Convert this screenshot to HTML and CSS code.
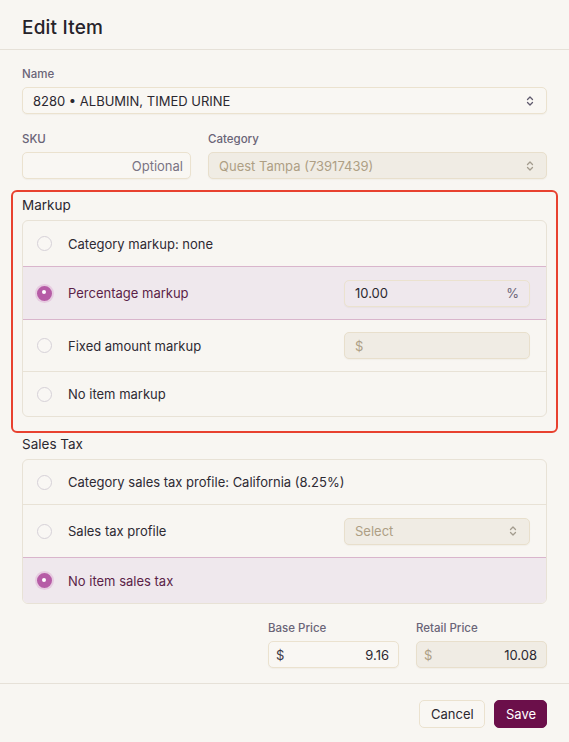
FILE: index.html
```html
<!DOCTYPE html>
<html>
<head>
<meta charset="utf-8">
<link rel="stylesheet" href="styles.css">
</head>
<body>
<div class="dialog">
  <div class="header"><h1>Edit Item</h1></div>
  <div class="body">
    <div class="field">
      <label class="lbl">Name</label>
      <div class="input select">
        <span class="val">8280 • ALBUMIN, TIMED URINE</span>
        <svg class="chev" width="8" height="12" viewBox="0 0 8 12"><path d="M1.5 4.5L4 2L6.5 4.5M1.5 7.5L4 10L6.5 7.5" fill="none" stroke="#5f5a6e" stroke-width="1.3" stroke-linecap="round" stroke-linejoin="round"/></svg>
      </div>
    </div>
    <div class="row2">
      <div class="field sku">
        <label class="lbl">SKU</label>
        <div class="input right"><span class="ph">Optional</span></div>
      </div>
      <div class="field cat">
        <label class="lbl">Category</label>
        <div class="input select disabled">
          <span class="dis">Quest Tampa (73917439)</span>
          <svg class="chev" width="8" height="12" viewBox="0 0 8 12"><path d="M1.5 4.5L4 2L6.5 4.5M1.5 7.5L4 10L6.5 7.5" fill="none" stroke="#a39c8e" stroke-width="1.3" stroke-linecap="round" stroke-linejoin="round"/></svg>
        </div>
      </div>
    </div>

    <div class="markup-wrap">
      <div class="section-title">Markup</div>
      <div class="card">
        <div class="opt first45"><span class="radio"></span><span class="otext">Category markup: none</span></div>
        <div class="opt sel tall"><span class="radio on"></span><span class="otext">Percentage markup</span>
          <div class="input side"><span class="val">10.00</span><span class="suffix">%</span></div>
        </div>
        <div class="opt tall short"><span class="radio"></span><span class="otext">Fixed amount markup</span>
          <div class="input side disabled"><span class="dis">$</span></div>
        </div>
        <div class="opt"><span class="radio"></span><span class="otext">No item markup</span></div>
      </div>
    </div>

    <div class="section-title tax">Sales Tax</div>
    <div class="card">
      <div class="opt"><span class="radio"></span><span class="otext">Category sales tax profile: California (8.25%)</span></div>
      <div class="opt tall"><span class="radio"></span><span class="otext">Sales tax profile</span>
        <div class="input side select disabled"><span class="dis">Select</span>
          <svg class="chev" width="8" height="12" viewBox="0 0 8 12"><path d="M1.5 4.5L4 2L6.5 4.5M1.5 7.5L4 10L6.5 7.5" fill="none" stroke="#a39c8e" stroke-width="1.3" stroke-linecap="round" stroke-linejoin="round"/></svg>
        </div>
      </div>
      <div class="opt sel last"><span class="radio on"></span><span class="otext">No item sales tax</span></div>
    </div>

    <div class="prices">
      <div class="field price">
        <label class="lbl">Base Price</label>
        <div class="input"><span class="cur">$</span><span class="num">9.16</span></div>
      </div>
      <div class="field price">
        <label class="lbl">Retail Price</label>
        <div class="input disabled"><span class="dis">$</span><span class="num dis">10.08</span></div>
      </div>
    </div>
  </div>
  <div class="footer">
    <button class="btn cancel">Cancel</button>
    <button class="btn save">Save</button>
  </div>
</div>
</body>
</html>
```

FILE: styles.css
```css
* { box-sizing: border-box; }
html, body { margin: 0; padding: 0; }
body {
  background: #f8f6f2;
  font-family: Inter, "Noto Sans", sans-serif;
  color: #2b2830;
  font-size: 13px;
}
.dialog { width: 569px; height: 742px; display: flex; flex-direction: column; }
.header {
  height: 50px;
  border-bottom: 1px solid #e6e1d8;
  padding: 0 22px;
  display: flex;
  align-items: center;
}
h1 { margin: 0; font-size: 19px; font-weight: 500; color: #26232a; letter-spacing: 0.2px; padding-top: 6px; }
.body { padding: 17px 22px 0 22px; display: flex; flex-direction: column; }
.field { display: flex; flex-direction: column; }
.lbl { font-size: 11.5px; font-weight: 500; color: #6a6477; margin-bottom: 6px; line-height: 14px; }
.input {
  height: 27px;
  border: 1px solid #ebe2cf;
  border-radius: 5px;
  background: #f9f7f3;
  display: flex;
  align-items: center;
  padding: 0 10px;
  font-size: 13px;
  box-shadow: 0 1px 1px rgba(120, 100, 60, 0.05);
}
.input.select { justify-content: space-between; }
.input.right { justify-content: flex-end; padding-right: 7px; }
.input.disabled { background: #f0ece4; border-color: #e8dfcc; }
.val { color: #2b2830; }
.ph { color: #7a7484; }
.dis { color: #ae9f84; }
.chev { margin-right: 2px; }
.row2 { display: flex; gap: 17px; margin-top: 18px; }
.sku { width: 169px; }
.cat { flex: 1; }

.markup-wrap {
  margin: 11px -11px 0 -11px;
  border: 2px solid #e8412f;
  border-radius: 6px;
  padding: 4px 9px 14px 9px;
}
.section-title { font-size: 13.5px; color: #2b2830; line-height: 18px; margin-bottom: 6px; }
.section-title.tax { margin-top: 2px; }
.card {
  border: 1px solid #e8e2d6;
  border-radius: 6px;
  background: #f8f6f2;
  overflow: hidden;
}
.opt {
  height: 45px;
  display: flex;
  align-items: center;
  padding: 0 16px 0 14px;
  border-top: 1px solid #e8e2d6;
}
.opt:first-child { border-top: none; height: 44px; }
.opt.first45 { height: 45px; }
.opt.tall { height: 53px; }
.opt.tall.short { height: 52px; }
.opt.sel { background: #efe8ed; border-top: 1px solid #d9b5cc; }
.opt.sel + .opt { border-top: 1px solid #d9b5cc; }
.opt.sel.last { height: 46px; }
.radio {
  width: 15px; height: 15px;
  border-radius: 50%;
  border: 1px solid #d6d1d8;
  background: #f9f7f4;
  flex: none;
}
.radio.on {
  background: #b65ca6;
  border: 4px solid #b65ca6;
  box-shadow: 0 0 0 2px #e6cbe0;
  position: relative;
}
.radio.on::after {
  content: "";
  position: absolute;
  left: 0.5px; top: 0.5px;
  width: 4px; height: 4px;
  border-radius: 50%;
  background: #fff;
}
.otext { margin-left: 16px; flex: 1; color: #2e2a33; }
.sel .otext { color: #5b1f48; }
.input.side { width: 186px; flex: none; justify-content: space-between; }
.suffix { color: #6a6477; }
.sel .input.side { background: #efe8ed; }

.prices { display: flex; justify-content: flex-end; gap: 17px; margin-top: 17px; }
.price { width: 131px; }
.price .input { justify-content: space-between; padding: 0 9px 0 7px; }
.cur { color: #3b3645; }
.num { color: #2b2830; }

.footer {
  margin-top: 15px;
  border-top: 1px solid #e6e1d8;
  display: flex;
  justify-content: flex-end;
  gap: 9px;
  padding: 16px 22px 0 0;
}
.btn {
  font-family: Inter, "Noto Sans", sans-serif;
  font-size: 13px;
  height: 28px;
  border-radius: 5px;
  padding: 0 11px;
  cursor: pointer;
}
.cancel { background: #f9f7f3; border: 1px solid #ebe2cf; color: #2b2830; width: 66px; }
.save { background: #6b0f4a; border: 1px solid #6b0f4a; color: #fff; width: 53px; }
```
